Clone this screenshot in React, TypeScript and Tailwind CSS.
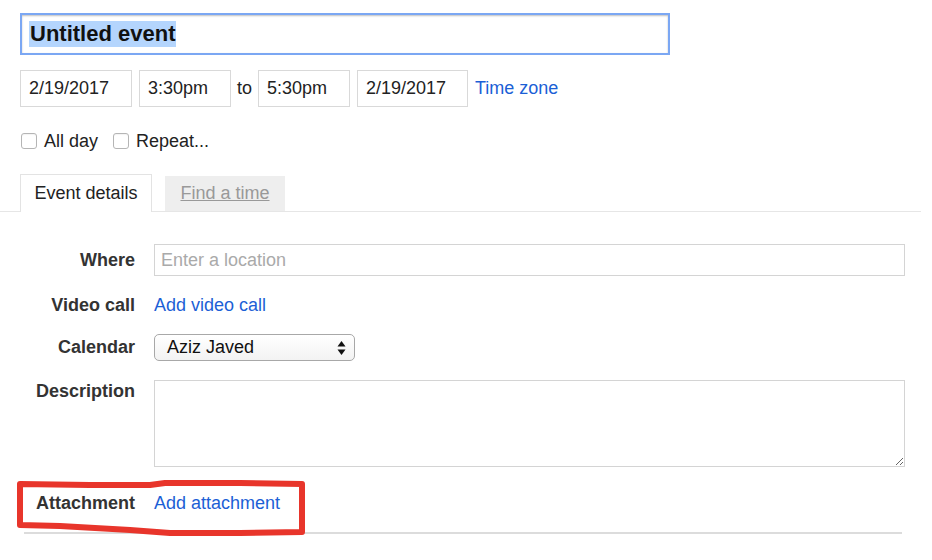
import React from "react";

const font = { fontFamily: '"Liberation Sans", Arial, sans-serif' };

function Box({ w, children }: { w: string; children: React.ReactNode }) {
  return (
    <div className={`${w} h-[37px] border border-[#d9d9d9] flex items-center pl-[8px] text-[18px] text-[#222] shrink-0`}>
      {children}
    </div>
  );
}

function Check({ label }: { label: string }) {
  return (
    <div className="flex items-center">
      <div className="w-[16px] h-[16px] rounded-[3px] border border-[#b5b5b5] bg-white shadow-[inset_0_1px_1px_rgba(0,0,0,0.05)]" />
      <span className="ml-[7px] text-[18px] text-[#222]">{label}</span>
    </div>
  );
}

export default function App() {
  return (
    <div className="relative w-[932px] h-[560px] bg-white overflow-hidden" style={font}>
      <div className="pt-[13px] pl-[20px]">
        {/* title */}
        <div className="w-[650px] h-[42px] border-2 border-[#7ba7f3] shadow-[inset_0_1px_2px_rgba(0,0,0,0.25)] flex items-center pl-[7px]">
          <span className="bg-[#b4d5fd] text-[22px] font-bold text-[#111] leading-[26px] px-[1px]">Untitled event</span>
        </div>

        {/* date row */}
        <div className="mt-[15px] flex items-center">
          <Box w="w-[112px]">2/19/2017</Box>
          <div className="w-[7px]" />
          <Box w="w-[92px]">3:30pm</Box>
          <span className="mx-[6px] text-[18px] text-[#222]">to</span>
          <Box w="w-[92px]">5:30pm</Box>
          <div className="w-[7px]" />
          <Box w="w-[111px]">2/19/2017</Box>
          <span className="ml-[7px] text-[18px] text-[#1c5fd6]">Time zone</span>
        </div>

        {/* checkboxes */}
        <div className="mt-[23px] flex items-center h-[22px] pl-[1px]">
          <Check label="All day" />
          <div className="w-[15px]" />
          <Check label="Repeat..." />
        </div>
      </div>

      {/* tabs */}
      <div className="mt-[22px] flex items-end border-b border-[#e6e6e6] pl-[20px] w-[921px] h-[38px]">
        <div className="w-[132px] h-[38px] border border-b-0 border-[#e3e3e3] bg-white flex items-center justify-center text-[18px] text-[#222] -mb-px pb-[1px]">
          Event details
        </div>
        <div className="ml-[13px] w-[120px] h-[35px] bg-[#eeeeee] flex items-center justify-center text-[18px] text-[#999] underline">
          Find a time
        </div>
      </div>

      {/* form */}
      <div className="text-[18px]">
        <div className="mt-[32px] flex items-center h-[32px]">
          <div className="w-[135px] text-right font-bold text-[#333]">Where</div>
          <div className="ml-[19px] w-[751px] h-[32px] border border-[#d4d4d4] flex items-center pl-[6px] text-[#aaa]">
            Enter a location
          </div>
        </div>

        <div className="mt-[16px] flex items-center h-[26px]">
          <div className="w-[135px] text-right font-bold text-[#333]">Video call</div>
          <div className="ml-[19px] text-[#1c5fd6]">Add video call</div>
        </div>

        <div className="mt-[16px] flex items-center h-[27px]">
          <div className="w-[135px] text-right font-bold text-[#333]">Calendar</div>
          <div className="ml-[19px] w-[201px] h-[27px] rounded-[5px] border border-[#a8a8a8] bg-gradient-to-b from-white to-[#f3f3f3] flex items-center pl-[12px] pr-[8px] text-[#111]">
            <span className="flex-1">Aziz Javed</span>
            <svg width="9" height="16" viewBox="0 0 9 16">
              <path d="M4.5 1 L8.5 6.5 L0.5 6.5 Z" fill="#111" />
              <path d="M4.5 15 L8.5 9.5 L0.5 9.5 Z" fill="#111" />
            </svg>
          </div>
        </div>

        <div className="mt-[19px] flex items-start">
          <div className="w-[135px] text-right font-bold text-[#333] leading-[22px]">Description</div>
          <textarea
            readOnly
            className="ml-[19px] w-[751px] h-[87px] border border-[#d4d4d4] outline-none resize"
          />
        </div>

        <div className="mt-[23px] flex items-center h-[26px]">
          <div className="w-[135px] text-right font-bold text-[#333]">Attachment</div>
          <div className="ml-[19px] text-[#1c5fd6]">Add attachment</div>
        </div>

        <div className="mt-[16px] ml-[24px] w-[878px] h-[2px] bg-[#dcdcdc]" />
      </div>

      {/* red annotation */}
      <svg className="absolute left-0 top-0 pointer-events-none" width="932" height="560">
        <path
          d="M20 484 L90 485 L150 485 L165 483 L240 483 L302 484 L302 532 L240 533 L170 533 L130 530 L60 526 L20 525 Z"
          fill="none"
          stroke="#e8352b"
          strokeWidth="6"
          strokeLinejoin="round"
        />
      </svg>
    </div>
  );
}
